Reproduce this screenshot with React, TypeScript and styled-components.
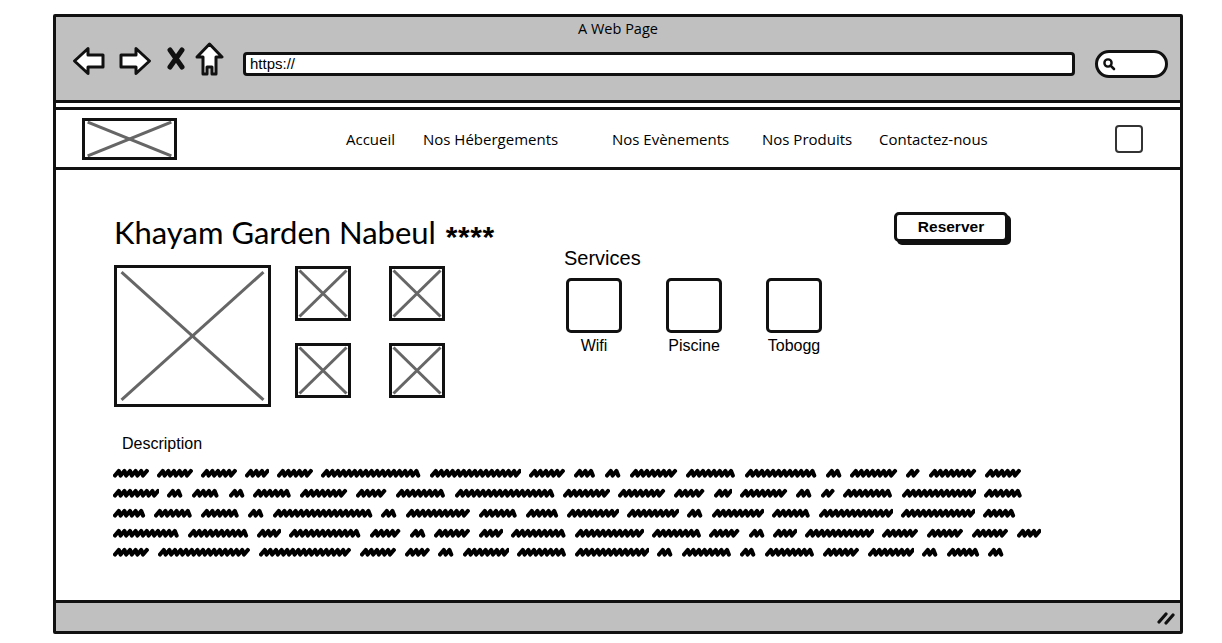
import React from "react";
import styled, { createGlobalStyle } from "styled-components";

const GlobalStyle = createGlobalStyle`
	html, body {
		margin: 0;
		padding: 0;
		background: #fff;
	}
	body {
		padding: 14px 0 0 53px;
		font-family: "Liberation Sans", Arial, sans-serif;
		color: #000;
	}
`;

const Window = styled.div`
	box-sizing: border-box;
	width: 1130px;
	height: 620px;
	border: 3px solid #111;
	border-radius: 2px;
	display: flex;
	flex-direction: column;
	background: #fff;
`;

const TitleBar = styled.div`
	background: #c0c0c0;
	border-bottom: 3px solid #111;
	height: 86px;
	box-sizing: border-box;
	display: flex;
	flex-direction: column;
`;

const PageTitle = styled.div`
	margin-top: 3px;
	height: 18px;
	line-height: 18px;
	text-align: center;
	font-family: "Open Sans", "Liberation Sans", sans-serif;
	font-size: 14.5px;
`;

const Toolbar = styled.div`
	display: flex;
	align-items: flex-start;
	margin-top: 4px;
	padding: 0 12px 0 16px;
`;

const Tool = styled.svg<{ $left: number; $top: number }>`
	flex: none;
	margin-left: ${(p) => p.$left}px;
	margin-top: ${(p) => p.$top}px;
`;

const UrlBar = styled.div`
	flex: 1;
	height: 24px;
	box-sizing: border-box;
	margin: 10px 0 0 19px;
	background: #fff;
	border: 3px solid #111;
	border-radius: 4px;
	padding-left: 4px;
	font-size: 15px;
	line-height: 18px;
`;

const SearchPill = styled.div`
	flex: none;
	width: 73px;
	height: 28px;
	box-sizing: border-box;
	margin: 8px 0 0 20px;
	background: #fff;
	border: 3px solid #111;
	border-radius: 14px;
	display: flex;
	align-items: center;
	padding-left: 4px;
`;

const Header = styled.header`
	margin-top: 4px;
	height: 63px;
	box-sizing: border-box;
	border-top: 3px solid #111;
	border-bottom: 3px solid #111;
	display: flex;
	align-items: center;
	padding: 0 37px 0 26px;
`;

const Placeholder = styled.div<{ $w: number; $h: number }>`
	flex: none;
	box-sizing: border-box;
	width: ${(p) => p.$w}px;
	height: ${(p) => p.$h}px;
	border: 3px solid #111;
	background: #fff;
	svg {
		display: block;
		width: 100%;
		height: 100%;
	}
`;

const Nav = styled.nav`
	display: flex;
	margin-left: 169px;
`;

const NavLink = styled.a<{ $w?: number }>`
	font-family: "Open Sans", "Liberation Sans", sans-serif;
	font-size: 15px;
	color: #000;
	text-decoration: none;
	white-space: nowrap;
	width: ${(p) => (p.$w ? `${p.$w}px` : "auto")};
`;

const Checkbox = styled.div`
	margin-left: auto;
	width: 28px;
	height: 28px;
	box-sizing: border-box;
	border: 2px solid #333;
	border-radius: 4px;
`;

const Content = styled.main`
	flex: 1;
	padding: 42px 0 0 58px;
	display: flex;
	flex-direction: column;
`;

const TopRow = styled.div`
	display: flex;
	align-items: flex-start;
`;

const LeftCol = styled.div`
	width: 450px;
	margin-top: 3px;
`;

const HotelTitle = styled.h1`
	margin: 0;
	height: 35px;
	font-family: Lato, "Liberation Sans", sans-serif;
	font-weight: 400;
	font-size: 31px;
	line-height: 35px;
	white-space: nowrap;
`;

const Stars = styled.span`
	font-family: "Liberation Sans", Arial, sans-serif;
	font-weight: 700;
	font-size: 30px;
	line-height: 0;
	letter-spacing: 0.5px;
	margin-left: 2px;
	vertical-align: -3px;
`;

const Gallery = styled.div`
	margin-top: 15px;
	display: flex;
	align-items: flex-start;
	gap: 24px;
`;

const Thumbs = styled.div`
	display: grid;
	grid-template-columns: 56px 56px;
	column-gap: 38px;
	row-gap: 22px;
	margin-top: 1px;
`;

const ServicesCol = styled.section`
	width: 330px;
	margin-top: 35px;
`;

const ServicesTitle = styled.div`
	font-size: 20px;
	line-height: 23px;
`;

const ServiceList = styled.div`
	display: flex;
	gap: 44px;
	margin: 8px 0 0 2px;
`;

const Service = styled.div`
	display: flex;
	flex-direction: column;
	align-items: center;
	width: 56px;
`;

const ServiceIcon = styled.div`
	width: 56px;
	height: 55px;
	box-sizing: border-box;
	border: 3px solid #111;
	border-radius: 5px;
`;

const ServiceLabel = styled.div`
	margin-top: 4px;
	font-size: 16px;
	line-height: 18px;
	white-space: nowrap;
`;

const ReserveButton = styled.button`
	width: 114px;
	height: 30px;
	box-sizing: border-box;
	border: 3px solid #111;
	border-radius: 5px;
	background: #fff;
	box-shadow: 3px 3px 0 #111;
	font-family: "Liberation Sans", Arial, sans-serif;
	font-weight: 700;
	font-size: 15.5px;
	color: #000;
	padding: 0;
`;

const DescLabel = styled.div`
	margin: 28px 0 0 8px;
	font-size: 16px;
	line-height: 18px;
`;

const Scribbles = styled.div`
	margin: 11px 0 0 -1px;
	display: flex;
	flex-direction: column;
`;

const ScribbleLine = styled.div`
	height: 19.75px;
	display: flex;
	align-items: center;
	gap: 8px;
`;

const StatusBar = styled.footer`
	height: 31px;
	box-sizing: border-box;
	background: #c0c0c0;
	border-top: 3px solid #111;
	display: flex;
	align-items: center;
	justify-content: flex-end;
	padding-right: 4px;
`;

const Cross = () => (
	<svg viewBox="0 0 100 100" preserveAspectRatio="none">
		<line x1="3" y1="3" x2="97" y2="97" stroke="#666" strokeWidth="3" vectorEffect="non-scaling-stroke" />
		<line x1="97" y1="3" x2="3" y2="97" stroke="#666" strokeWidth="3" vectorEffect="non-scaling-stroke" />
	</svg>
);

// redacted text: a bold slanted zigzag per word
const Word = ({ w }: { w: number }) => {
	const pts: string[] = [];
	let up = false;
	for (let x = 2; x <= w - 2; x += 2.8) {
		pts.push(up ? `${(x + 1).toFixed(1)},3` : `${x.toFixed(1)},7.5`);
		up = !up;
	}
	return (
		<svg width={w} height={11} style={{ flex: "none" }}>
			<polyline points={pts.join(" ")} fill="none" stroke="#000" strokeWidth="4.2" strokeLinejoin="round" strokeLinecap="round" />
		</svg>
	);
};

const lines: { target: number; words: number[] }[] = [
	{ target: 912, words: [36, 36, 36, 24, 36, 100, 90, 37, 23, 17, 48, 51, 72, 16, 48, 15, 48, 36] },
	{ target: 912, words: [43, 16, 27, 15, 36, 45, 30, 47, 93, 44, 45, 30, 17, 45, 16, 13, 47, 69, 35] },
	{ target: 907, words: [30, 36, 36, 16, 92, 16, 60, 36, 30, 48, 48, 16, 48, 36, 68, 68, 30] },
	{ target: 929, words: [66, 60, 24, 72, 32, 16, 36, 24, 55, 68, 48, 32, 16, 24, 68, 36, 36, 36, 24] },
	{ target: 890, words: [36, 90, 90, 36, 24, 16, 45, 48, 72, 16, 48, 16, 48, 36, 45, 16, 32, 16] },
];

const navItems: { label: string; w?: number }[] = [
	{ label: "Accueil", w: 77 },
	{ label: "Nos Hébergements", w: 189 },
	{ label: "Nos Evènements", w: 150 },
	{ label: "Nos Produits", w: 117 },
	{ label: "Contactez-nous" },
];

const services = ["Wifi", "Piscine", "Tobogg"];

export default function App() {
	return (
		<>
			<GlobalStyle />
			<Window>
				<TitleBar>
					<PageTitle>A Web Page</PageTitle>
					<Toolbar>
						<Tool $left={0} $top={3} width="34" height="32" viewBox="0 0 34 32">
							<polygon points="2.5,16 16,3.5 16,10 31,10 31,22 16,22 16,28.5" fill="#fff" stroke="#111" strokeWidth="3" strokeLinejoin="round" />
						</Tool>
						<Tool $left={12} $top={3} width="34" height="32" viewBox="0 0 34 32">
							<polygon points="31.5,16 18,3.5 18,10 3,10 3,22 18,22 18,28.5" fill="#fff" stroke="#111" strokeWidth="3" strokeLinejoin="round" />
						</Tool>
						<Tool $left={14} $top={5} width="20" height="23" viewBox="0 0 20 23">
							<path d="M4 3 L16 20 M16 3 L4 20" stroke="#111" strokeWidth="5" strokeLinecap="round" />
						</Tool>
						<Tool $left={9} $top={0} width="29" height="34" viewBox="0 0 29 34">
							<polygon points="14.5,2 27,15 21,15 21,32 17,32 17,25 12,25 12,32 8,32 8,15 2,15" fill="#fff" stroke="#111" strokeWidth="3" strokeLinejoin="round" />
						</Tool>
						<UrlBar>https://</UrlBar>
						<SearchPill>
							<svg width="14" height="14" viewBox="0 0 14 14">
								<circle cx="6" cy="6" r="3.6" fill="none" stroke="#111" strokeWidth="2.4" />
								<line x1="8.6" y1="8.6" x2="12" y2="12" stroke="#111" strokeWidth="2.6" strokeLinecap="round" />
							</svg>
						</SearchPill>
					</Toolbar>
				</TitleBar>
				<Header>
					<Placeholder $w={95} $h={42}>
						<Cross />
					</Placeholder>
					<Nav>
						{navItems.map((n) => (
							<NavLink key={n.label} $w={n.w}>
								{n.label}
							</NavLink>
						))}
					</Nav>
					<Checkbox />
				</Header>
				<Content>
					<TopRow>
						<LeftCol>
							<HotelTitle>
								Khayam Garden Nabeul <Stars>****</Stars>
							</HotelTitle>
							<Gallery>
								<Placeholder $w={157} $h={142}>
									<Cross />
								</Placeholder>
								<Thumbs>
									{[0, 1, 2, 3].map((i) => (
										<Placeholder key={i} $w={56} $h={55}>
											<Cross />
										</Placeholder>
									))}
								</Thumbs>
							</Gallery>
						</LeftCol>
						<ServicesCol>
							<ServicesTitle>Services</ServicesTitle>
							<ServiceList>
								{services.map((s) => (
									<Service key={s}>
										<ServiceIcon />
										<ServiceLabel>{s}</ServiceLabel>
									</Service>
								))}
							</ServiceList>
						</ServicesCol>
						<ReserveButton>Reserver</ReserveButton>
					</TopRow>
					<DescLabel>Description</DescLabel>
					<Scribbles>
						{lines.map((line, li) => {
							const sum = line.words.reduce((a, b) => a + b, 0);
							const scale = (line.target - 8 * (line.words.length - 1)) / sum;
							return (
								<ScribbleLine key={li}>
									{line.words.map((w, wi) => (
										<Word key={wi} w={Math.round(w * scale)} />
									))}
								</ScribbleLine>
							);
						})}
					</Scribbles>
				</Content>
				<StatusBar>
					<svg width="20" height="16" viewBox="0 0 20 16">
						<path d="M3 13 L10 5 M10 14 L17 6" stroke="#111" strokeWidth="3.2" strokeLinecap="round" />
					</svg>
				</StatusBar>
			</Window>
		</>
	);
}
